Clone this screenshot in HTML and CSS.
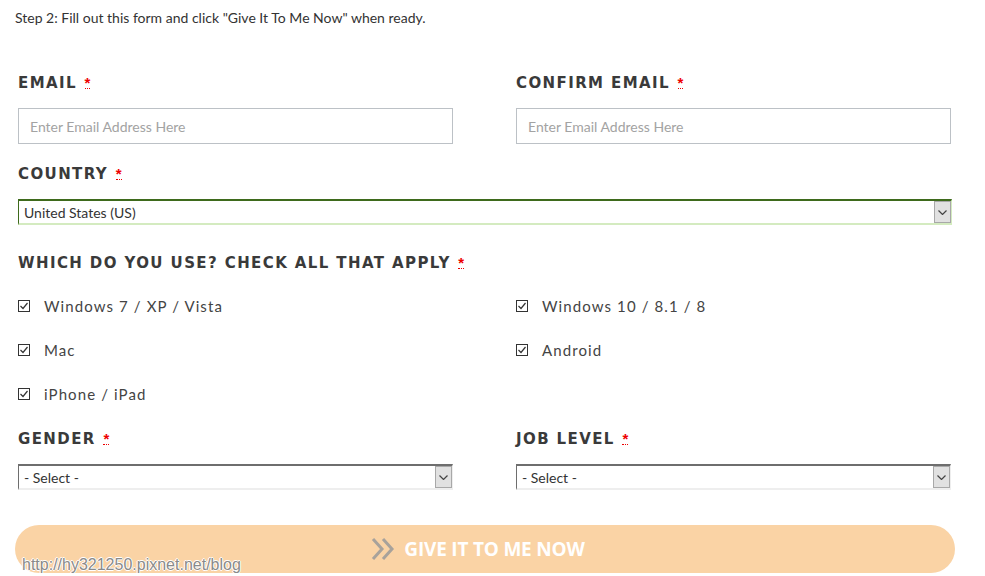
FILE: index.html
```html
<!DOCTYPE html>
<html lang="en">
  <head>
    <meta charset="UTF-8" />
    <meta name="viewport" content="width=device-width, initial-scale=1.0" />
    <title>Download Form</title>
    <link rel="stylesheet" href="styles.css">
  </head>
  <body>
    <div class="page">
      <p class="step">Step 2: Fill out this form and click "Give It To Me Now" when ready.</p>

      <form class="signup">
        <div class="row two">
          <div class="field">
            <label for="email">Email <abbr title="required">*</abbr></label>
            <input type="email" id="email" placeholder="Enter Email Address Here" />
          </div>
          <div class="field">
            <label for="confirmEmail">Confirm Email <abbr title="required">*</abbr></label>
            <input type="email" id="confirmEmail" placeholder="Enter Email Address Here" />
          </div>
        </div>

        <div class="field country">
          <label for="country">Country <abbr title="required">*</abbr></label>
          <div class="select-box green">
            <select id="country">
              <option>United States (US)</option>
            </select>
            <span class="arrow"><svg width="9" height="5" viewBox="0 0 9 5"><path d="M0.5 0.5 L4.5 4.5 L8.5 0.5" fill="none" stroke="#444" stroke-width="1.2"/></svg></span>
          </div>
        </div>

        <div class="field uses">
          <label>Which do you use? Check all that apply <abbr title="required">*</abbr></label>
          <div class="checks">
            <div class="check"><span class="box"><svg width="12" height="12" viewBox="0 0 12 12"><rect x="0.5" y="0.5" width="11" height="11" fill="#fff" stroke="#333"/><path d="M2.5 6 L5 8.5 L9.5 3" fill="none" stroke="#333" stroke-width="1.2"/></svg></span>Windows 7 / XP / Vista</div>
            <div class="check"><span class="box"><svg width="12" height="12" viewBox="0 0 12 12"><rect x="0.5" y="0.5" width="11" height="11" fill="#fff" stroke="#333"/><path d="M2.5 6 L5 8.5 L9.5 3" fill="none" stroke="#333" stroke-width="1.2"/></svg></span>Windows 10 / 8.1 / 8</div>
            <div class="check"><span class="box"><svg width="12" height="12" viewBox="0 0 12 12"><rect x="0.5" y="0.5" width="11" height="11" fill="#fff" stroke="#333"/><path d="M2.5 6 L5 8.5 L9.5 3" fill="none" stroke="#333" stroke-width="1.2"/></svg></span>Mac</div>
            <div class="check"><span class="box"><svg width="12" height="12" viewBox="0 0 12 12"><rect x="0.5" y="0.5" width="11" height="11" fill="#fff" stroke="#333"/><path d="M2.5 6 L5 8.5 L9.5 3" fill="none" stroke="#333" stroke-width="1.2"/></svg></span>Android</div>
            <div class="check"><span class="box"><svg width="12" height="12" viewBox="0 0 12 12"><rect x="0.5" y="0.5" width="11" height="11" fill="#fff" stroke="#333"/><path d="M2.5 6 L5 8.5 L9.5 3" fill="none" stroke="#333" stroke-width="1.2"/></svg></span>iPhone / iPad</div>
          </div>
        </div>

        <div class="row two">
          <div class="field">
            <label for="gender">Gender <abbr title="required">*</abbr></label>
            <div class="select-box">
              <select id="gender">
                <option>- Select -</option>
              </select>
              <span class="arrow"><svg width="9" height="5" viewBox="0 0 9 5"><path d="M0.5 0.5 L4.5 4.5 L8.5 0.5" fill="none" stroke="#444" stroke-width="1.2"/></svg></span>
            </div>
          </div>
          <div class="field">
            <label for="jobLevel">Job Level <abbr title="required">*</abbr></label>
            <div class="select-box">
              <select id="jobLevel">
                <option>- Select -</option>
              </select>
              <span class="arrow"><svg width="9" height="5" viewBox="0 0 9 5"><path d="M0.5 0.5 L4.5 4.5 L8.5 0.5" fill="none" stroke="#444" stroke-width="1.2"/></svg></span>
            </div>
          </div>
        </div>

        <button type="button" class="submit">
          <svg width="25" height="22" viewBox="0 0 25 22"><path d="M2 1 L11 11 L2 21 M12 1 L21 11 L12 21" fill="none" stroke="#a8a29b" stroke-width="3"/></svg>
          Give It To Me Now
        </button>
      </form>

      <span class="watermark">http://hy321250.pixnet.net/blog</span>
    </div>
  </body>
</html>
```

FILE: styles.css
```css
/* Global styles */
* {
  margin: 0;
  padding: 0;
  box-sizing: border-box;
}

body {
  background: #ffffff;
  color: #333;
  font-family: "Lato", sans-serif;
}

.page {
  position: relative;
  width: 985px;
  height: 576px;
  overflow: hidden;
  padding: 8px 33px 0 18px;
}

.step {
  font-size: 14px;
  line-height: 20px;
  margin-left: -3px;
  color: #333;
}

.signup {
  display: flex;
  flex-direction: column;
  margin-top: 45px;
}

.row.two {
  display: grid;
  grid-template-columns: 435px 435px;
  column-gap: 63px;
}

.field label {
  display: block;
  font-family: "DejaVu Sans", sans-serif;
  font-weight: bold;
  font-size: 15px;
  line-height: 20px;
  letter-spacing: 1.4px;
  text-transform: uppercase;
  color: #3a3a3a;
  margin-bottom: 15px;
}

.field abbr {
  color: #e00;
  text-decoration: none;
  border-bottom: 1px dotted #e00;
  font-family: "Liberation Sans", sans-serif;
  font-weight: bold;
  font-size: 15px;
  line-height: 10px;
  display: inline-block;
  letter-spacing: 0;
  margin-left: 1px;
}

.field input {
  display: block;
  width: 100%;
  height: 36px;
  border: 1px solid #bcc1c6;
  padding: 0 11px;
  font-family: "Lato", sans-serif;
  font-size: 14px;
  color: #333;
}

.field input::placeholder {
  color: #a3a3a3;
}

.country {
  margin-top: 20px;
}

.select-box {
  position: relative;
  height: 26px;
  border-style: solid;
  border-width: 2px 1px 2px 1px;
  border-color: #6e6e6e #eeeeee #eeeeee #6e6e6e;
}

.select-box.green {
  border-color: #3e6a1c #d4ebc0 #d4ebc0 #3e6a1c;
}

.select-box select {
  appearance: none;
  -webkit-appearance: none;
  display: block;
  width: 100%;
  height: 100%;
  border: none;
  background: #fff;
  padding: 0 5px;
  font-family: "Lato", sans-serif;
  font-size: 14px;
  color: #333;
  outline: none;
}

.select-box .arrow {
  position: absolute;
  top: 0;
  right: 0;
  width: 17px;
  height: 100%;
  background: #e1e1e1;
  border: 1px solid #a8a8a8;
  display: flex;
  align-items: center;
  justify-content: center;
}

.uses {
  margin-top: 28px;
}

.uses label {
  margin-bottom: 11px;
}

.checks {
  display: grid;
  grid-template-columns: 498px 435px;
}

.check {
  display: flex;
  align-items: center;
  height: 44px;
  font-size: 15px;
  letter-spacing: 1.1px;
  color: #444;
}

.check .box {
  display: flex;
  width: 12px;
  margin-right: 14px;
}

.signup > .row.two:last-of-type {
  margin-top: 13px;
}

.submit {
  margin: 35px -3px 0 -3px;
  height: 48px;
  border: none;
  border-radius: 24px;
  background: #fad3a5;
  color: #ffffff;
  font-family: "Open Sans", sans-serif;
  font-weight: bold;
  font-size: 19px;
  letter-spacing: -0.2px;
  text-transform: uppercase;
  display: flex;
  align-items: center;
  justify-content: center;
  gap: 8px;
  padding-right: 14px;
}

.watermark {
  position: absolute;
  left: 22px;
  top: 556px;
  font-family: "Liberation Sans", sans-serif;
  font-size: 16px;
  color: #8a8a8a;
  text-shadow: 1px 0 #fff, -1px 0 #fff, 0 1px #fff, 0 -1px #fff;
}
```
